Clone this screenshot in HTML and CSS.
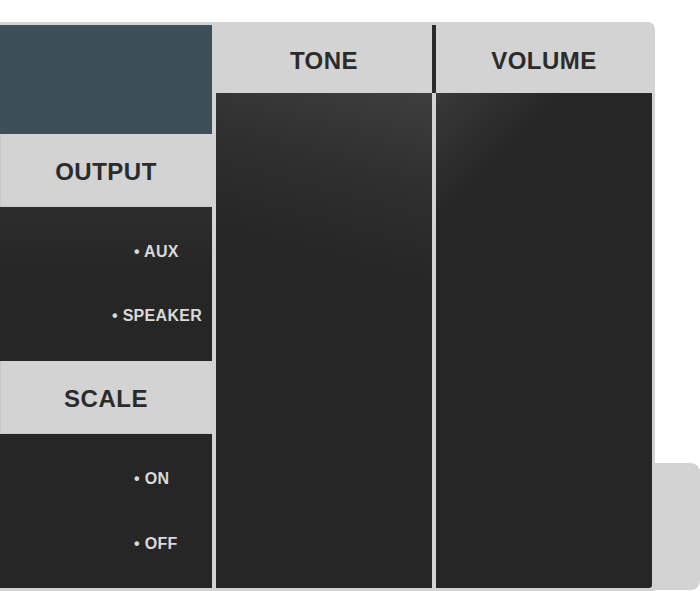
FILE: index.html
```html
<!DOCTYPE html>
<html lang="en">
<head>
  <meta charset="UTF-8" />
  <meta name="viewport" content="width=device-width,initial-scale=1" />
  <title>Synth Panel</title>
  <link rel="stylesheet" href="styles.css">
</head>
<body>

  <div class="stage">

    <!-- MAIN PANEL -->
    <div class="panel">

      <!-- left column: output + scale -->
      <div class="side">
        <div class="screen"></div>
        <div class="label">OUTPUT</div>
        <ul class="options options-top">
          <li>• AUX</li>
          <li class="wide">• SPEAKER</li>
        </ul>
        <div class="label">SCALE</div>
        <ul class="options">
          <li>• ON</li>
          <li>• OFF</li>
        </ul>
      </div>

      <!-- knobs -->
      <div class="column">
        <div class="label label-plain divided">TONE</div>
        <div class="pad pad-tone"></div>
      </div>
      <div class="column">
        <div class="label label-plain">VOLUME</div>
        <div class="pad pad-volume"></div>
      </div>

    </div>

    <!-- tab sticking out behind the panel -->
    <div class="tab"></div>

  </div>

</body>
</html>
```

FILE: styles.css
```css
body { margin: 0; font-family: "Liberation Sans", Arial, sans-serif; background: #fff; overflow: hidden; }
.stage { display: flex; align-items: flex-end; padding-top: 22px; }

.panel {
  display: grid;
  grid-template-columns: 212px 216px 216px;
  column-gap: 4px;
  width: 652px;
  padding: 3px 3px 3px 0;
  background: #d3d3d3;
  border-radius: 0 7px 0 0;
}

.tab { width: 45px; height: 127px; margin-bottom: 1px; background: #d3d3d3; border-radius: 0 9px 9px 0; }

/* left column */
.side { display: flex; flex-direction: column; }
.screen { height: 109px; background: #3d5058; }
.label {
  height: 73px; box-sizing: border-box; padding-top: 2px;
  display: flex; align-items: center; justify-content: center;
  font-weight: bold; font-size: 24px; letter-spacing: .5px; color: #2b2b2b;
  background: #d3d3d3;
  box-shadow: inset 1px -1px 0 #c9c9c9;
}
.options {
  height: 154px; margin: 0; padding: 35px 0 0 134px; box-sizing: border-box;
  list-style: none;
  display: flex; flex-direction: column; gap: 44px;
  background: #262626;
  font-weight: bold; font-size: 16px; letter-spacing: .3px; color: #dadada;
}
.options li { line-height: 20px; }
.options li.wide { margin-left: -22px; }
.options:last-child { gap: 45px; }
.options-top { background: linear-gradient(180deg, #2d2d2d 0%, #262626 45%); }

/* knob columns */
.column { display: flex; flex-direction: column; }
.label-plain { height: 68px; padding-top: 3px; box-shadow: none; position: relative; }
.divided::after { content: ""; position: absolute; top: 0; right: -4px; width: 4px; height: 100%; background: #2a2a2a; }
.pad { flex: 1; background: #262626; }
.pad-tone { background: linear-gradient(195deg, #3e3e3e 0%, #2f2f2f 18%, #262626 36%); }
.pad-volume { background: linear-gradient(135deg, #393939 0%, #262626 19%); border-radius: 0 0 3px 0; }
```
